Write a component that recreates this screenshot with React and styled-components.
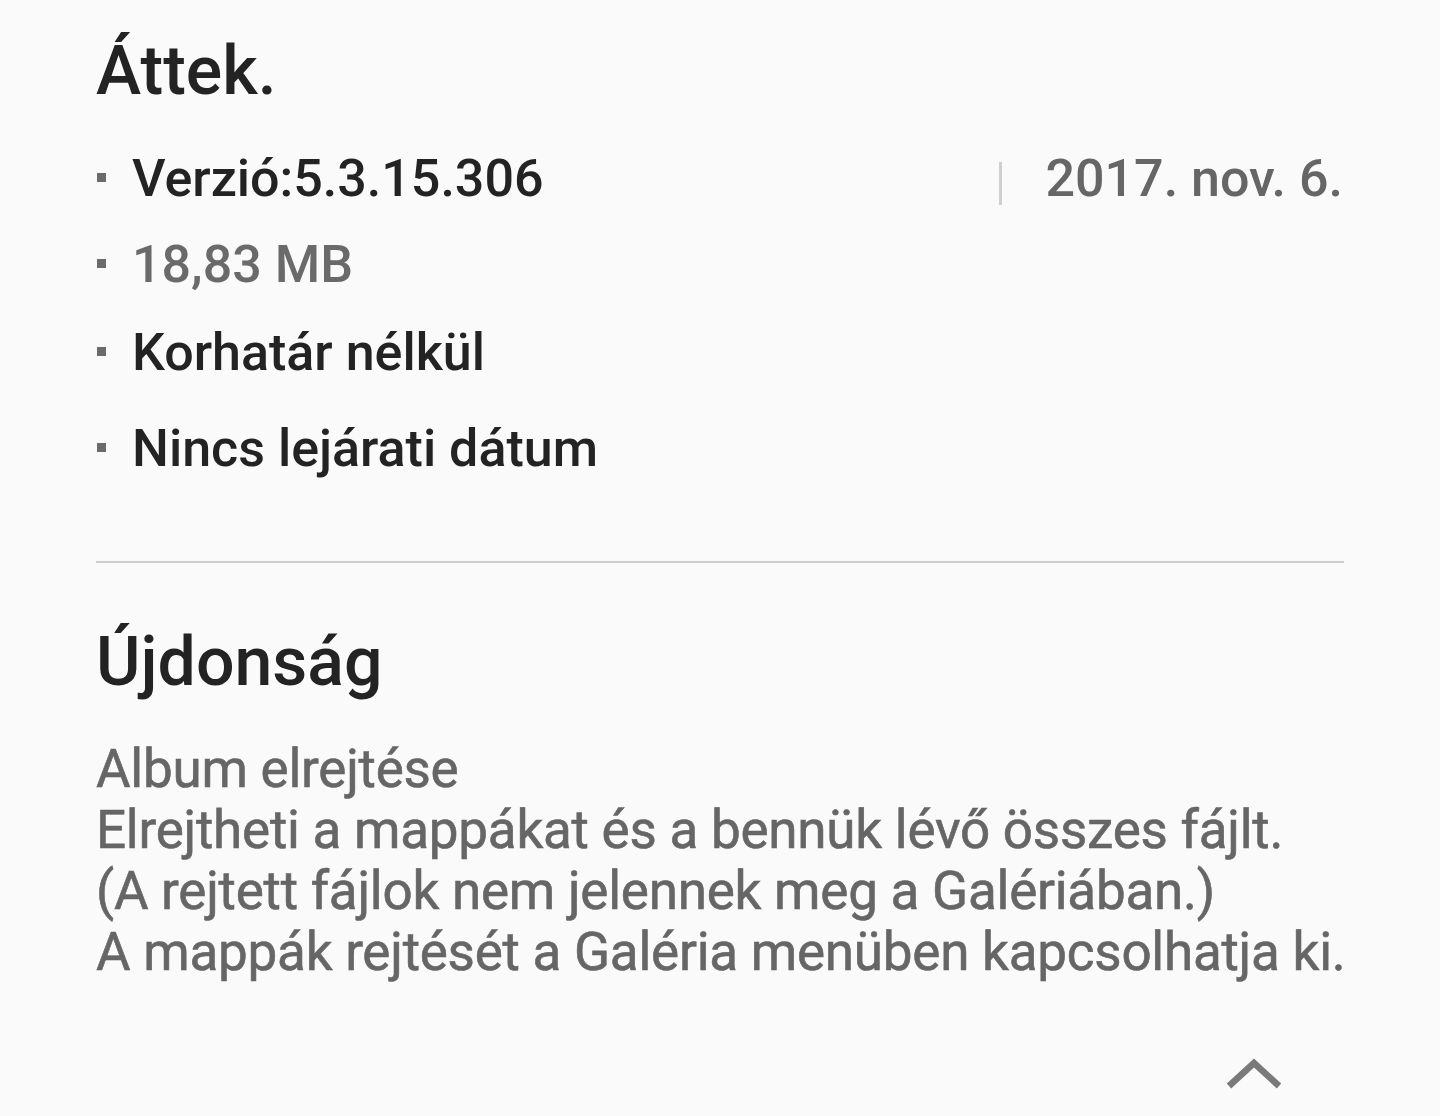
import React from "react";
import styled, { createGlobalStyle } from "styled-components";

const Global = createGlobalStyle`
  html, body { margin: 0; padding: 0; background: #fafafa; }
  body { font-family: Roboto, "Noto Sans", "Liberation Sans", sans-serif; }
`;

const Page = styled.div`
  width: 1440px;
  height: 1116px;
  box-sizing: border-box;
  padding: 31px 96px 0 96px;
  background: #fafafa;
  overflow: hidden;
`;

const Title = styled.h1`
  margin: ${(p) => p.$mt || 0}px 0 0 0;
  font-size: ${(p) => p.$size}px;
  line-height: 80px;
  font-weight: 500;
  color: #232323;
  letter-spacing: 0;
`;

const List = styled.ul`
  list-style: none;
  margin: 24px 0 0 0;
  padding: 0;
  display: flex;
  flex-direction: column;
`;

const Row = styled.li`
  display: flex;
  align-items: center;
  height: 88px;
  margin-top: ${(p) => p.$mt || 0}px;
`;

const Bullet = styled.span`
  flex: none;
  width: 9px;
  height: 9px;
  margin: -4px 26px 0 1px;
  background: #6b6b6b;
`;

const ItemText = styled.span`
  flex: 1;
  font-size: 52px;
  line-height: 88px;
  font-weight: 500;
  color: ${(p) => (p.$muted ? "#6a6a6a" : "#232323")};
  white-space: nowrap;
`;

const Meta = styled.div`
  flex: none;
  width: 345px;
  display: flex;
  align-items: center;
  justify-content: space-between;
`;

const Separator = styled.span`
  width: 3px;
  height: 43px;
  margin-top: 9px;
  background: #cfcfcf;
`;

const DateText = styled.span`
  font-size: 52px;
  line-height: 88px;
  font-weight: 500;
  color: #666666;
  padding-right: 1px;
`;

const Divider = styled.hr`
  margin: 68px 0 0 0;
  border: 0;
  height: 2px;
  background: #cdcdcd;
`;

const Body = styled.div`
  margin-top: 37px;
  font-size: 53px;
  line-height: 61px;
  font-weight: 400;
  letter-spacing: -0.25px;
  color: #666666;
  -webkit-text-stroke: 0.6px #666666;
`;

const Line = styled.div`
  white-space: nowrap;
`;

const Footer = styled.div`
  display: flex;
  justify-content: flex-end;
  padding-right: 62px;
  margin-top: 75px;
`;

const Chevron = () => (
  <svg width="56" height="32" viewBox="0 0 56 32">
    <polyline
      points="3,28 28,5 53,28"
      fill="none"
      stroke="#7a7a7a"
      strokeWidth="6.5"
      strokeLinecap="butt"
      strokeLinejoin="miter"
    />
  </svg>
);

export default function App() {
  return (
    <>
      <Global />
      <Page>
        <Title $size={68}>Áttek.</Title>
        <List>
          <Row>
            <Bullet />
            <ItemText>Verzió:5.3.15.306</ItemText>
            <Meta>
              <Separator />
              <DateText>2017. nov. 6.</DateText>
            </Meta>
          </Row>
          <Row $mt={-2}>
            <Bullet />
            <ItemText $muted>18,83 MB</ItemText>
          </Row>
          <Row>
            <Bullet />
            <ItemText>Korhatár nélkül</ItemText>
          </Row>
          <Row $mt={8}>
            <Bullet />
            <ItemText>Nincs lejárati dátum</ItemText>
          </Row>
        </List>
        <Divider />
        <Title $size={68} $mt={59}>Újdonság</Title>
        <Body>
          <Line>Album elrejtése</Line>
          <Line>Elrejtheti a mappákat és a bennük lévő összes fájlt.</Line>
          <Line>(A rejtett fájlok nem jelennek meg a Galériában.)</Line>
          <Line>A mappák rejtését a Galéria menüben kapcsolhatja ki.</Line>
        </Body>
        <Footer>
          <Chevron />
        </Footer>
      </Page>
    </>
  );
}
